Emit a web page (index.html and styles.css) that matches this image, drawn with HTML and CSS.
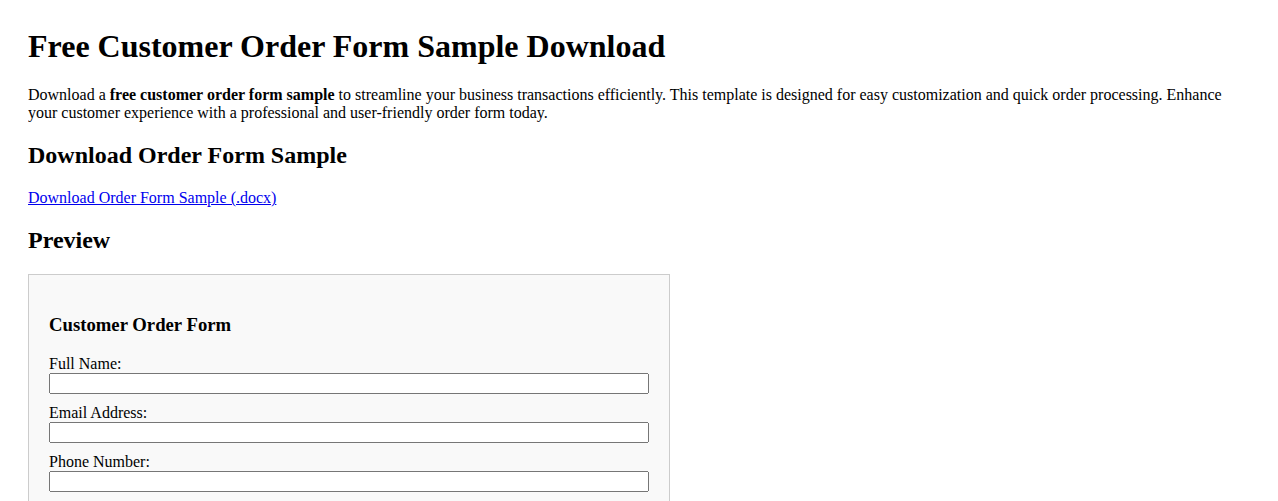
FILE: index.html
```html
<!DOCTYPE html>
<html lang="en">
<head>
<meta charset="utf-8">
<title>Free Customer Order Form Sample Download</title>
<link rel="stylesheet" href="styles.css">
</head>
<body>
<h1>Free Customer Order Form Sample Download</h1>
<p>Download a <strong>free customer order form sample</strong> to streamline your business transactions efficiently. This template is designed for easy customization and quick order processing. Enhance your customer experience with a professional and user-friendly order form today.</p>
<h2>Download Order Form Sample</h2>
<p><a href="#">Download Order Form Sample (.docx)</a></p>
<h2>Preview</h2>
<div class="preview">
  <form class="order-form">
    <h3>Customer Order Form</h3>
    <div class="field">
      <label for="name">Full Name:</label>
      <input id="name" type="text">
    </div>
    <div class="field">
      <label for="email">Email Address:</label>
      <input id="email" type="email">
    </div>
    <div class="field">
      <label for="phone">Phone Number:</label>
      <input id="phone" type="tel">
    </div>
    <div class="field">
      <label for="product">Product Name:</label>
      <input id="product" type="text">
    </div>
    <div class="field">
      <label for="qty">Quantity:</label>
      <input id="qty" type="number">
    </div>
  </form>
</div>
</body>
</html>
```

FILE: styles.css
```css
body {
  margin: 28px;
  font-family: "Liberation Serif", "Times New Roman", serif;
  font-size: 16px;
  color: #000;
  background: #fff;
}

h1 {
  margin-top: 0;
}

.preview {
  max-width: 600px;
  border: 1px solid #ccc;
  padding: 20px;
  background: #f9f9f9;
}

.order-form h3 {
  margin: 1em 0;
}

.field {
  margin-bottom: 10px;
}

.field label {
  display: block;
}

.field input {
  display: block;
  width: 100%;
  box-sizing: border-box;
  height: 21px;
  margin: 0;
}
```
